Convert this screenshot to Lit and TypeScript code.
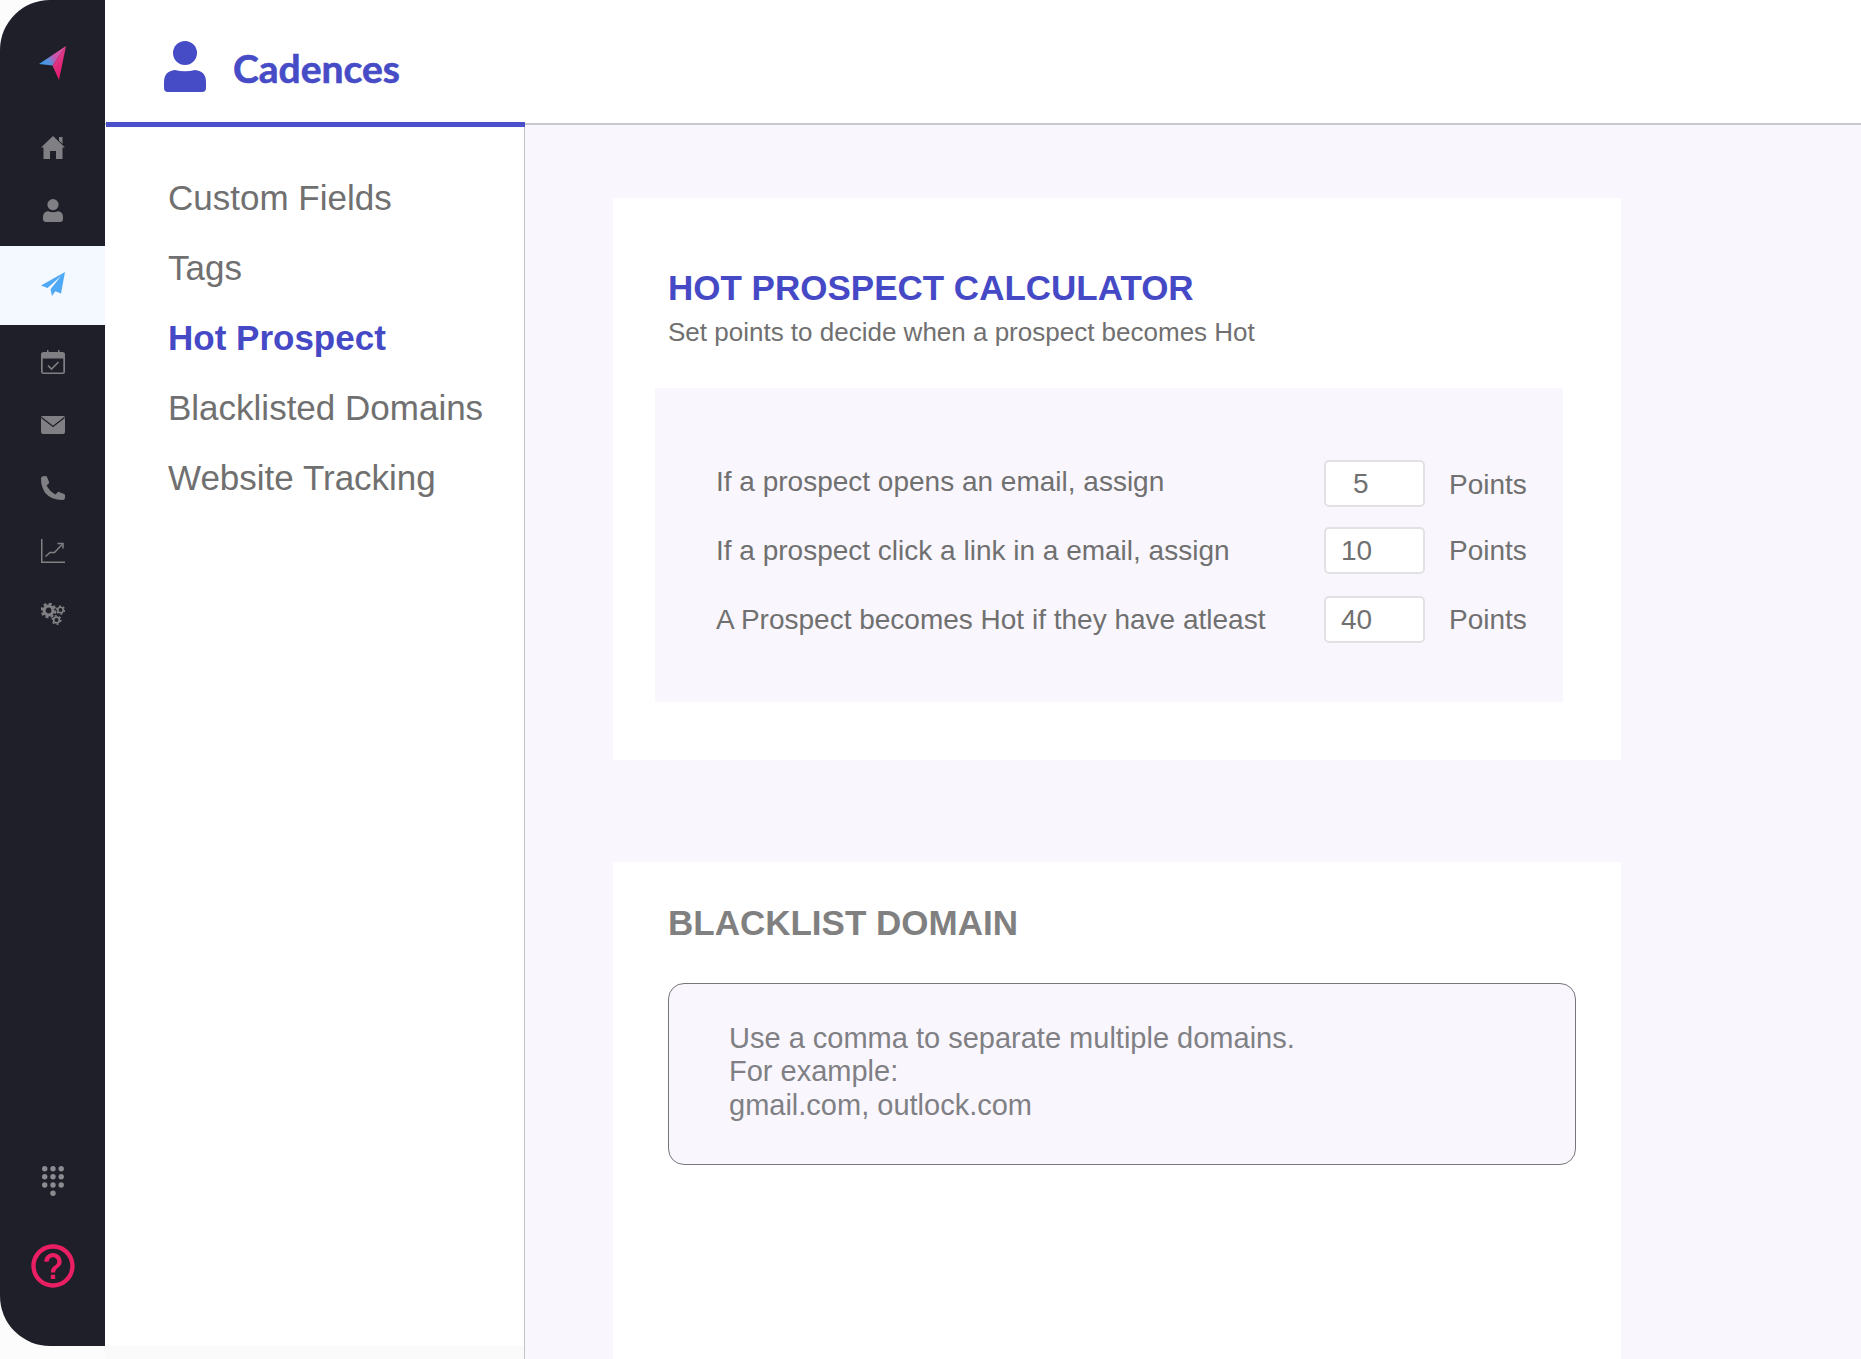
import { LitElement, html, css } from "lit";
import { customElement } from "lit/decorators.js";

const rows = [
  ["If a prospect opens an email, assign", "5"],
  ["If a prospect click a link in a email, assign", "10"],
  ["A Prospect becomes Hot if they have atleast", "40"],
];

@customElement("app-root")
export class AppRoot extends LitElement {
  static styles = css`
    :host { display: block; font-family: "Liberation Sans", Arial, sans-serif; }
    * { box-sizing: border-box; }
    .shell { display: flex; height: 1359px; width: 1861px; overflow: hidden; background: #fcfcfc; }
    .side { width: 105px; height: 1346px; flex: none; background: #1e1f28; border-radius: 50px 0 0 50px; display: flex; flex-direction: column; align-items: stretch; overflow: hidden; }
    .logo { height: 116px; display: flex; justify-content: center; padding-top: 46px; }
    .logo svg { width: 27px; height: 34px; }
    .item { height: 63px; display: flex; align-items: center; justify-content: center; color: #808084; }
    .item svg { display: block; }
    .item.on { height: 79px; background: #f4f8ff; margin: 4px 0 5px; color: #4fa9f5; }
    .item.on svg { margin-top: -3px; }
    .spacer { flex: 1; }
    .dial { height: 60px; margin-bottom: 29px; display: flex; justify-content: center; align-items: center; }
    .help { height: 106px; display: flex; justify-content: center; }
    .help svg { display: block; }
    .right { flex: 1; display: flex; flex-direction: column; min-width: 0; }
    .head { height: 125px; flex: none; background: #fff; border-bottom: 2px solid #c8c8cc; display: flex; align-items: center; position: relative; padding: 0 0 0 59px; }
    .head::after { content: ""; position: absolute; left: 1px; width: 419px; top: 122px; height: 5px; background: #4a4fcb; }
    .head svg { width: 42px; height: 51px; margin-top: 10px; }
    .title { font-family: "Lato", sans-serif; font-weight: 700; font-size: 39px; -webkit-text-stroke: 0.6px #464bc6; color: #464bc6; margin-left: 27px; margin-top: 13px; }
    .body { flex: 1; display: flex; min-height: 0; }
    .panel { width: 420px; flex: none; border-right: 1px solid #c4c4c8; display: flex; flex-direction: column; }
    .nav { flex: 1; background: #fff; padding: 38px 0 0 63px; display: flex; flex-direction: column; }
    .strip { height: 13px; background: #fafafa; flex: none; }
    .link { height: 70px; display: flex; align-items: center; font-size: 35px; color: #707070; }
    .link.on { color: #4549c6; font-weight: 700; }
    .main { flex: 1; background: #f9f7fd; padding: 73px 0 0 88px; min-width: 0; }
    .card { width: 1008px; background: #fff; }
    .c1 { height: 562px; padding: 68px 0 0 55px; margin-bottom: 102px; }
    .c2 { height: 600px; padding: 39px 0 0 55px; }
    h1 { margin: 0; font-size: 35px; line-height: 44px; font-weight: 700; color: #4549c6; }
    .sub { font-size: 26px; line-height: 32px; color: #707070; margin-top: 6px; }
    .calc { width: 908px; height: 314px; margin: 40px 0 0 -13px; background: #f9f7fd; padding: 72px 0 0 61px; display: flex; flex-direction: column; }
    .row { display: flex; height: 47px; align-items: center; font-size: 28px; color: #707070; }
    .row:nth-child(2) { margin-top: 20px; }
    .row:nth-child(3) { margin-top: 22px; }
    .lbl { width: 608px; flex: none; margin-top: 1px; }
    .row:first-child .lbl { margin-top: -3px; }
    input { width: 101px; height: 47px; border: 2px solid #e2e2e4; border-radius: 5px; background: #fff; font: 28px "Liberation Sans", Arial, sans-serif; color: #707070; text-align: left; padding: 0 0 0 15px; outline: none; }
    .row:first-child input { padding-left: 27px; }
    .pts { margin-left: 24px; }
    .row:first-child .pts { margin-top: 3px; }
    h2 { margin: 0; font-size: 35px; line-height: 44px; font-weight: 700; color: #808080; }
    .box { width: 908px; height: 182px; margin-top: 38px; background: #f9f7fd; border: 1px solid #77777b; border-radius: 16px; padding: 38px 0 0 60px; font-size: 29px; line-height: 33.3px; color: #808084; }
  `;

  render() {
    return html`<div class="shell">
      <aside class="side">
        <div class="logo">
          <svg viewBox="0 0 27 34">
            <defs>
              <linearGradient id="g1" x1="0" y1="0.75" x2="1" y2="0.3"><stop offset="0" stop-color="#3f9be8"/><stop offset="0.3" stop-color="#5a8fdc"/><stop offset="0.55" stop-color="#c955b0"/><stop offset="1" stop-color="#e4509f"/></linearGradient>
              <linearGradient id="g2" x1="0.2" y1="0" x2="0.6" y2="1"><stop offset="0" stop-color="#dc4c98"/><stop offset="1" stop-color="#e5126a"/></linearGradient>
            </defs>
            <polygon points="0,18 27,0 13.5,19.5" fill="url(#g1)"/>
            <polygon points="13.5,19.5 27,0 20,34" fill="url(#g2)"/>
          </svg>
        </div>
        <div class="item"><svg width="24" height="23" viewBox="0 0 24 23" fill="currentColor"><path d="M12 0 L24 11.5 L21.5 11.5 L21.5 23 L15 23 L15 15 L9 15 L9 23 L2.5 23 L2.5 11.5 L0 11.5 Z"/><path d="M18 1 H21.5 V8 L18 4.6 Z"/></svg></div>
        <div class="item"><svg width="20" height="23" viewBox="0 0 20 23" fill="currentColor"><circle cx="10" cy="5.6" r="5.6"/><path d="M5 12.3 Q10 14.3 15 12.3 Q20 13 20 18 V20 Q20 23 17 23 H3 Q0 23 0 20 V18 Q0 13 5 12.3 Z"/></svg></div>
        <div class="item on"><svg width="24" height="24" viewBox="0 0 24 24" fill="currentColor"><path d="M24 0 L0 13.5 L6.5 16 L20 4 L9.5 17.3 L11 24 L14.3 19.3 L20 21.5 Z"/></svg></div>
        <div class="item"><svg width="24" height="24" viewBox="0 0 24 24"><path fill="currentColor" d="M2.5 2 H6 V0 H7.5 V2 H17 V0 H18.5 V2 H21.5 Q24 2 24 4.5 V21.5 Q24 24 21.5 24 H2.5 Q0 24 0 21.5 V4.5 Q0 2 2.5 2 Z"/><rect x="1.7" y="8.5" width="20.6" height="14" fill="#1e1f28"/><path d="M7 15.5 L10.5 19 L17.5 12" fill="none" stroke="currentColor" stroke-width="1.6"/></svg></div>
        <div class="item"><svg width="24" height="18" viewBox="0 0 24 18"><path fill="currentColor" d="M1.5 0 H22.5 Q24 0 24 1.5 V16 Q24 18 22 18 H2 Q0 18 0 16 V1.5 Q0 0 1.5 0 Z"/><path d="M0.5 1.5 L12 10.5 L23.5 1.5" fill="none" stroke="#1e1f28" stroke-width="1.3"/></svg></div>
        <div class="item"><svg width="24" height="24" viewBox="0 0 24 24" fill="currentColor"><path d="M0 2.6 Q0 0.6 2 0.2 L4.6 0 Q5.6 0 6 1 L8 6 Q8.3 7 7.5 7.7 L5.6 9.4 Q8.5 15.2 14.6 18.4 L16.4 16.4 Q17.1 15.6 18 16 L23 18 Q24 18.4 24 19.5 V22 Q23.7 23.8 21.6 24 Q10 24 4.3 17 Q0 11 0 2.6 Z"/></svg></div>
        <div class="item"><svg width="24" height="24" viewBox="0 0 24 24" fill="none" stroke="currentColor"><path d="M0.75 0 V23.25 H24" stroke-width="1.5"/><path d="M4.5 17.5 L9 13.5 H13.5 L21 5.5" stroke-width="1.5"/><path d="M16.5 4.5 H22 V9.5" stroke-width="1.5"/></svg></div>
        <div class="item"><svg width="24" height="22" viewBox="0 0 24 22" fill="none" stroke="currentColor">
          <circle cx="7.5" cy="7.5" r="4.4" stroke-width="3"/><circle cx="7.5" cy="7.5" r="6.7" stroke-width="2.4" stroke-dasharray="3 2.26"/>
          <circle cx="19.5" cy="7" r="2.7" stroke-width="1.6"/><circle cx="19.5" cy="7" r="4" stroke-width="1.4" stroke-dasharray="2 2.2"/>
          <circle cx="15.5" cy="17" r="2.9" stroke-width="1.7"/><circle cx="15.5" cy="17" r="4.3" stroke-width="1.5" stroke-dasharray="2 2.5"/>
        </svg></div>
        <div class="spacer"></div>
        <div class="dial"><svg width="22" height="30" viewBox="0 0 22 30" fill="#8c8c90">
          <circle cx="2.7" cy="2.7" r="2.7"/><circle cx="11" cy="2.7" r="2.7"/><circle cx="19.2" cy="2.7" r="2.7"/>
          <circle cx="2.7" cy="10.8" r="2.7"/><circle cx="11" cy="10.8" r="2.7"/><circle cx="19.2" cy="10.8" r="2.7"/>
          <circle cx="2.7" cy="19" r="2.7"/><circle cx="11" cy="19" r="2.7"/><circle cx="19.2" cy="19" r="2.7"/>
          <circle cx="11" cy="27.2" r="2.7"/></svg></div>
        <div class="help"><svg width="52" height="52" viewBox="0 0 24 24" fill="#e91e63"><path d="M11 18h2v-2h-2v2zm1-16C6.48 2 2 6.48 2 12s4.48 10 10 10 10-4.48 10-10S17.52 2 12 2zm0 18c-4.41 0-8-3.59-8-8s3.59-8 8-8 8 3.59 8 8-3.59 8-8 8zm0-14c-2.21 0-4 1.79-4 4h2c0-1.1.9-2 2-2s2 .9 2 2c0 2-3 1.75-3 5h2c0-2.25 3-2.5 3-5 0-2.21-1.79-4-4-4z"/></svg></div>
      </aside>
      <div class="right">
        <header class="head">
          <svg viewBox="0 0 42 51" fill="#464bc6"><circle cx="21" cy="12" r="12"/><path d="M11 29 Q21 31.5 31 29 Q42 30 42 41 V47 Q42 51 38 51 H4 Q0 51 0 47 V41 Q0 30 11 29 Z"/></svg>
          <div class="title">Cadences</div>
        </header>
        <div class="body">
          <div class="panel">
            <nav class="nav">
              <div class="link">Custom Fields</div>
              <div class="link">Tags</div>
              <div class="link on">Hot Prospect</div>
              <div class="link">Blacklisted Domains</div>
              <div class="link">Website Tracking</div>
            </nav>
            <div class="strip"></div>
          </div>
          <main class="main">
            <section class="card c1">
              <h1>HOT PROSPECT CALCULATOR</h1>
              <div class="sub">Set points to decide when a prospect becomes Hot</div>
              <div class="calc">
                ${rows.map(([l, v]) => html`<div class="row"><span class="lbl">${l}</span><input .value=${v} /><span class="pts">Points</span></div>`)}
              </div>
            </section>
            <section class="card c2">
              <h2>BLACKLIST DOMAIN</h2>
              <div class="box">Use a comma to separate multiple domains.<br />For example:<br />gmail.com, outlock.com</div>
            </section>
          </main>
        </div>
      </div>
    </div>`;
  }
}
